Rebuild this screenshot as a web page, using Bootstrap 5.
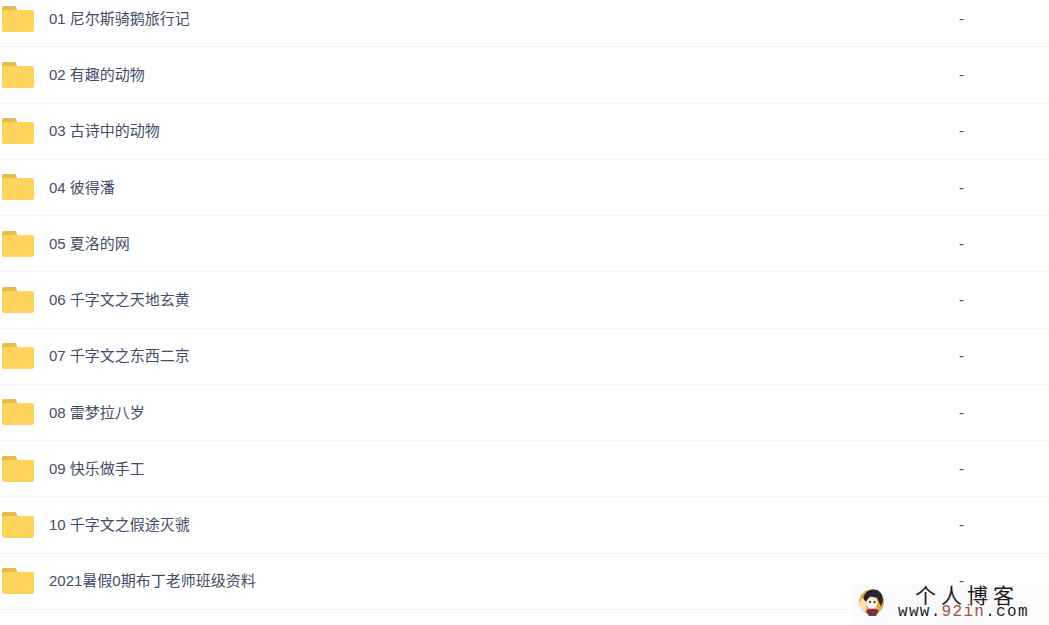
<!DOCTYPE html>
<html>
<head>
  <meta charset="utf-8">
  <link href="https://cdn.jsdelivr.net/npm/bootstrap@5.3.0/dist/css/bootstrap.min.css" rel="stylesheet">
  <style>
    html, body { height: 625px; overflow: hidden; }
    body { font-family: "Liberation Sans", Arial, "Noto Sans CJK SC", sans-serif; background: #fff; position: relative; }
    .file-list { margin-top: -9px; }
    .file-row { height: 56.25px; border-bottom: 1px solid #f4f4f8; color: #424e67; font-size: 15px; padding-left: 2px; }
    .folder-ico { width: 32px; height: 26px; margin-right: 15px; flex: none; }
    .file-name, .file-size { padding-top: 1px; }
    .file-name { width: 910px; flex: none; white-space: nowrap; }
    .wm { position: absolute; left: 852px; top: 584px; width: 197px; height: 41px; background: rgba(250,250,250,.92); color: #1d1d1d; }
    .wm-face { position: absolute; left: 6px; top: 5px; width: 26px; height: 27px; }
    .wm-title { position: absolute; left: 63px; top: -2px; font-family: "Noto Sans CJK SC", serif; font-size: 21px; line-height: 25px; letter-spacing: 5px; white-space: nowrap; }
    .wm-url { position: absolute; left: 46px; top: 19px; font-family: "Liberation Mono", monospace; font-size: 16px; line-height: 18px; letter-spacing: 1.3px; white-space: nowrap; }
    .wm-url b { color: #a0524a; font-weight: 400; }
  </style>
</head>
<body>
  <svg width="0" height="0" class="position-absolute">
    <symbol id="folder" viewBox="0 0 32 26">
      <path d="M0 2a2 2 0 0 1 2-2h10.500a2 2 0 0 1 2 1.500l.5 2.500v4H0z" fill="#e4bb4e"/>
      <rect x="0" y="4" width="32" height="22" rx="2" fill="#ffd45c"/>
    </symbol>
  </svg>

  <div class="file-list" id="list"></div>

  <div class="wm">
    <svg class="wm-face" viewBox="0 0 26 27">
      <circle cx="13.500" cy="13" r="12.500" fill="#dca945"/>
      <path d="M5 11C6 3 11 .5 16 .5s9 4 9 11l-2 6-4-9-7-1-4 5z" fill="#2b2430"/>
      <path d="M0 14l5-5 4 6-1 8-5-2z" fill="#f5e0bd"/>
      <ellipse cx="14" cy="14" rx="5.500" ry="6" fill="#f7efe6"/>
      <circle cx="12" cy="13" r="1.100" fill="#222"/>
      <circle cx="16.500" cy="13" r="1.100" fill="#222"/>
      <path d="M8 22c2-3 11-3 13 0l-3 5h-7z" fill="#7c2f48"/>
    </svg>
    <div class="wm-title">个人博客</div>
    <div class="wm-url">www.<b>92in</b>.com</div>
  </div>

  <script src="https://cdn.jsdelivr.net/npm/bootstrap@5.3.0/dist/js/bootstrap.bundle.min.js"></script>
  <script>
    // folder rows
    const names = ['01 尼尔斯骑鹅旅行记','02 有趣的动物','03 古诗中的动物','04 彼得潘','05 夏洛的网','06 千字文之天地玄黄','07 千字文之东西二京','08 雷梦拉八岁','09 快乐做手工','10 千字文之假途灭虢','2021暑假0期布丁老师班级资料'];
    document.getElementById('list').innerHTML = names.map(n =>
      `<div class="file-row d-flex align-items-center">
        <svg class="folder-ico"><use href="#folder"/></svg>
        <div class="file-name">${n}</div>
        <div class="file-size">-</div>
      </div>`).join('');
  </script>
</body>
</html>
